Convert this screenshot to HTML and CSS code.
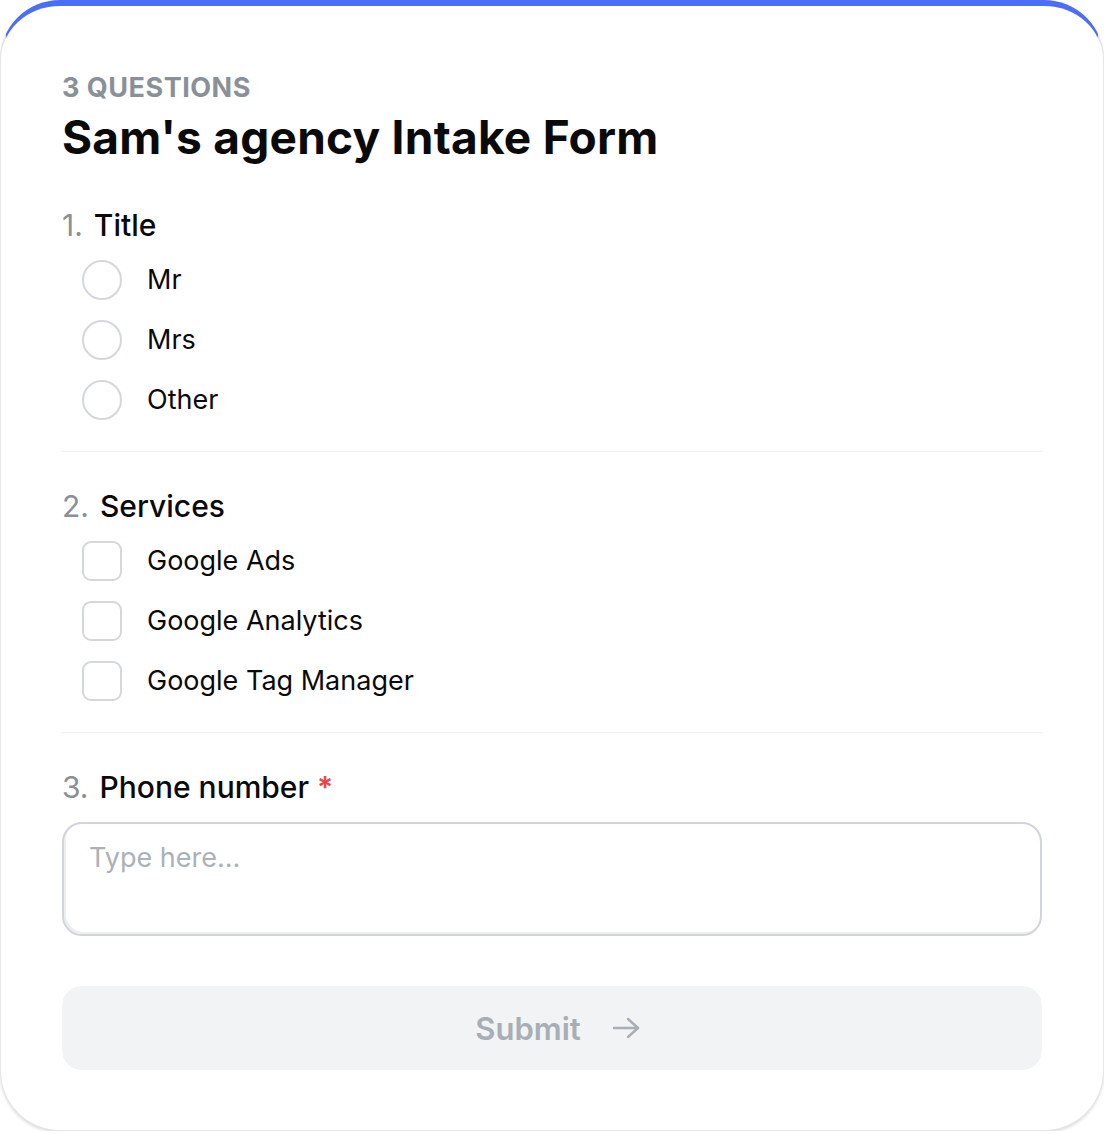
FILE: index.html
```html
<!DOCTYPE html>
<html lang="en">
<head>
<meta charset="utf-8">
<title>Sam's agency Intake Form</title>
<link rel="stylesheet" href="styles.css">
</head>
<body>
<div class="card">
  <header class="header">
    <div class="eyebrow">3 QUESTIONS</div>
    <h1 class="title">Sam's agency Intake Form</h1>
  </header>

  <section class="question">
    <h2 class="q-title"><span class="q-num">1.</span> Title</h2>
    <div class="options">
      <label class="option"><span class="radio"></span><span class="opt-text">Mr</span></label>
      <label class="option"><span class="radio"></span><span class="opt-text">Mrs</span></label>
      <label class="option"><span class="radio"></span><span class="opt-text">Other</span></label>
    </div>
  </section>

  <section class="question">
    <h2 class="q-title"><span class="q-num">2.</span> Services</h2>
    <div class="options">
      <label class="option"><span class="checkbox"></span><span class="opt-text">Google Ads</span></label>
      <label class="option"><span class="checkbox"></span><span class="opt-text">Google Analytics</span></label>
      <label class="option"><span class="checkbox"></span><span class="opt-text">Google Tag Manager</span></label>
    </div>
  </section>

  <section class="question last">
    <h2 class="q-title"><span class="q-num">3.</span> Phone number <span class="req">*</span></h2>
    <div class="textarea">Type here...</div>
  </section>

  <button class="submit" type="button">
    <span>Submit</span>
    <svg class="arrow" width="30" height="24" viewBox="0 0 30 24" fill="none" stroke="currentColor" stroke-width="2.4" stroke-linecap="round" stroke-linejoin="round">
      <path d="M3 12 H27"/>
      <path d="M17 3 L27 12 L17 21"/>
    </svg>
  </button>
</div>
</body>
</html>
```

FILE: styles.css
```css
* { box-sizing: border-box; }

html, body {
  margin: 0;
  padding: 0;
  background: #ffffff;
}

body {
  font-family: "Inter", "Noto Sans", "Liberation Sans", sans-serif;
  color: #0b0b0c;
}

.card {
  width: 1104px;
  background: #ffffff;
  border: 1px solid #e3e5e8;
  border-top: 6px solid #4c6ef5;
  border-radius: 60px;
  padding: 66px 61px 60px;
  box-shadow: 0 2px 3px rgba(0, 0, 0, 0.12);
}

.header {
  display: flex;
  flex-direction: column;
  gap: 5px;
}

.eyebrow {
  font-size: 27px;
  line-height: 32px;
  font-weight: 700;
  color: #8a9098;
  letter-spacing: 0.5px;
}

.title {
  margin: 0;
  font-size: 46px;
  line-height: 56px;
  font-weight: 700;
  letter-spacing: 0.25px;
  color: #0a0a0a;
}

.question {
  padding: 34px 0 31px;
  border-bottom: 1px solid #eceef0;
  display: flex;
  flex-direction: column;
  gap: 15px;
}

.header + .question { padding-top: 40px; }

.question.last {
  border-bottom: none;
  padding-bottom: 0;
}

.q-title {
  margin: 0;
  font-size: 30px;
  line-height: 40px;
  font-weight: 500;
  color: #0a0a0a;
}

.q-num {
  color: #8a9098;
  font-weight: 400;
  margin-right: 3px;
}

.req {
  color: #ef4444;
  font-weight: 600;
}

.options {
  display: flex;
  flex-direction: column;
  gap: 20px;
  padding-left: 20px;
}

.option {
  display: flex;
  align-items: center;
  gap: 25px;
  height: 40px;
}

.radio,
.checkbox {
  width: 40px;
  height: 40px;
  border: 2px solid #d4d8dd;
  flex: none;
}

.radio { border-radius: 50%; }
.checkbox { border-radius: 9px; }

.opt-text {
  font-size: 27px;
  line-height: 32px;
  color: #0a0a0a;
}

.textarea {
  height: 114px;
  border: 2px solid #d1d5db;
  border-radius: 20px;
  padding: 17px 25px;
  font-size: 27px;
  line-height: 34px;
  color: #aab1b9;
  box-shadow: inset 2px -2px 0 #eceef0;
}

.submit {
  margin-top: 50px;
  width: 100%;
  height: 84px;
  border: none;
  border-radius: 20px;
  background: #f2f3f5;
  color: #a8aeb5;
  font-family: inherit;
  font-size: 31px;
  font-weight: 600;
  display: flex;
  align-items: center;
  justify-content: center;
  gap: 30px;
  padding: 0 0 0 12px;
}

.arrow { display: block; }
```
